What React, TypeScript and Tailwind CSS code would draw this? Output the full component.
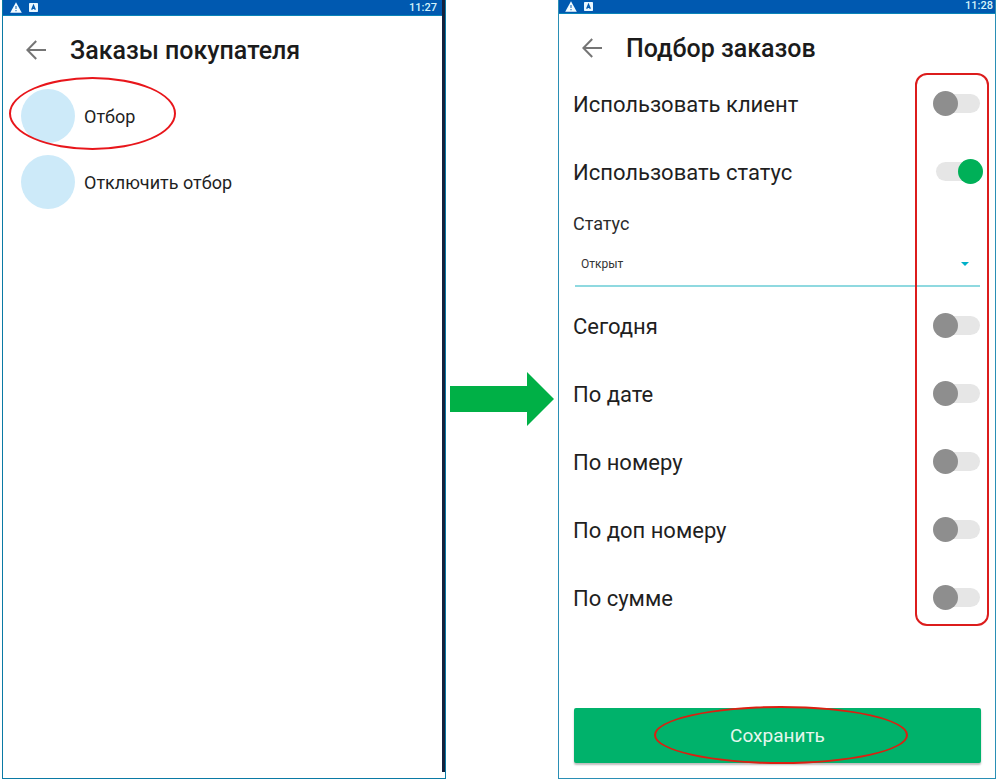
import React, { useState } from "react";
import clsx from "clsx";

const actions = ["Отбор", "Отключить отбор"];

const clientFilters = [
  { id: "client", title: "Использовать клиент", on: false },
  { id: "status", title: "Использовать статус", on: true },
];

const otherFilters = [
  { id: "today", title: "Сегодня", on: false },
  { id: "date", title: "По дате", on: false },
  { id: "number", title: "По номеру", on: false },
  { id: "extra", title: "По доп номеру", on: false },
  { id: "sum", title: "По сумме", on: false },
];

function StatusBar({ time, className }: { time: string; className: string }) {
  return (
    <div
      className={clsx(
        "flex items-center bg-[#0059b0] border-b border-[#0a84b8] text-[#d5f3fb]",
        className
      )}
    >
      <svg width="12" height="11" viewBox="0 0 12 11" className="shrink-0">
        <path d="M6 0.2 11.8 10.8H0.2Z" fill="#f2fbff" />
        <path d="M6 4v3M6 8v1.2" stroke="#3f82c2" strokeWidth="1.3" />
      </svg>
      <svg width="9" height="9" viewBox="0 0 8 8" className="ml-[7px] shrink-0">
        <rect width="8" height="8" rx="0.6" fill="#e9f7ff" />
        <path d="M2.4 6 4 2.2 5.6 6M3 4.8h2" fill="none" stroke="#0059b0" strokeWidth="1.2" />
      </svg>
      <span className="ml-auto text-[11px] leading-3 font-medium">{time}</span>
    </div>
  );
}

function Header({ title }: { title: string }) {
  return (
    <header className="flex items-center h-14 pt-3 pl-[23px]">
      <button type="button" aria-label="Назад" className="shrink-0">
        <svg width="20" height="20" viewBox="0 0 20 20" fill="none" stroke="#757575" strokeWidth="2">
          <path d="M20 10H1.6M10.2 1 1.4 10l8.8 9" />
        </svg>
      </button>
      <h1 className="ml-6 pt-0.5 text-[25px] leading-8 font-medium text-[#1b1b1b] whitespace-nowrap">{title}</h1>
    </header>
  );
}

function ToggleRow({ id, title, on }: { id: string; title: string; on: boolean }) {
  const [checked, setChecked] = useState(on);
  return (
    <div className="flex items-center justify-between h-[68px] pb-0.5 pl-[14px] pr-[15px]">
      <label htmlFor={id} className="pt-1 text-[22px] leading-7 text-[#1f1f1f]">
        {title}
      </label>
      <input
        id={id}
        type="checkbox"
        role="switch"
        checked={checked}
        onChange={(e) => setChecked(e.target.checked)}
        className="relative appearance-none shrink-0 w-11 h-[19px] rounded-full bg-[#e6e6e6] before:content-[''] before:absolute before:-top-[3px] before:-left-[3px] before:size-[25px] before:rounded-full before:bg-[#8e8e8e] checked:before:left-[22px] checked:before:bg-[#00b058]"
      />
    </div>
  );
}

function OrdersScreen() {
  return (
    <section className="flex flex-col flex-[444] min-w-0 border border-t-0 border-[#0a7aa5]">
      <div className="flex flex-col flex-1 mb-1.5 border-r-[3px] border-[#14213d]">
        <StatusBar time="11:27" className="h-4 pl-[7px] pr-[5px]" />
        <Header title="Заказы покупателя" />
        <ul className="flex flex-col gap-3 pt-[17px] pl-[18px]">
          {actions.map((action, ind: number) => (
            <li key={action} className="relative">
              <button type="button" className="flex items-center gap-[9px] text-lg text-[#1f1f1f]">
                <span className="size-[54px] rounded-full bg-[#cdeaf9]" />
                <span className="pt-0.5">{action}</span>
              </button>
              {ind === 0 && (
                <span className="absolute -top-3 -left-3 w-[167px] h-[73px] rounded-[50%] border-2 border-[#e8161b] pointer-events-none" />
              )}
            </li>
          ))}
        </ul>
      </div>
    </section>
  );
}

function FilterScreen() {
  return (
    <section className="flex flex-col flex-[438] min-w-0 border border-t-0 border-[#2a8fb5]">
      <StatusBar time="11:28" className="h-[14px] pl-1.5 pr-0.5 pb-px" />
      <Header title="Подбор заказов" />
      <form className="flex flex-col flex-1" onSubmit={(e) => e.preventDefault()}>
        <div className="relative">
          {clientFilters.map((filter) => (
            <ToggleRow key={filter.id} {...filter} />
          ))}
          <label htmlFor="statusValue" className="flex items-center h-9 pl-[14px] text-lg text-[#2b2b2b]">
            Статус
          </label>
          <div className="relative ml-4 mr-[15px] mb-[5px]">
            <select
              id="statusValue"
              className="block appearance-none w-full h-[45px] pl-1.5 text-xs text-[#333333] border-b-2 border-[#8fd9e0]"
            >
              <option>Открыт</option>
            </select>
            <svg width="8" height="4" viewBox="0 0 8 4" className="absolute right-[11px] top-5 pointer-events-none">
              <path d="M0 0h8L4 4Z" fill="#00b0c8" />
            </svg>
          </div>
          {otherFilters.map((filter) => (
            <ToggleRow key={filter.id} {...filter} />
          ))}
          <span className="absolute top-[3px] bottom-1.5 right-1.5 w-[74px] rounded-xl border-2 border-[#dc1c1c] pointer-events-none" />
        </div>
        <button
          type="submit"
          className="relative h-[55px] mt-auto ml-[15px] mr-[14px] mb-[15px] pt-0.5 rounded-xs bg-[#00b26b] text-[19px] text-[#e4f7ee] shadow-[0_2px_2px_#bdbdbd]"
        >
          Сохранить
          <span className="absolute -top-0.5 left-20 w-[254px] h-[58px] rounded-[50%] border-2 border-[#dc1f10] pointer-events-none" />
        </button>
      </form>
    </section>
  );
}

function App() {
  return (
    <main className="flex min-h-screen pl-0.5 pr-1 bg-white font-[Roboto,sans-serif]">
      <OrdersScreen />
      <div className="flex items-center justify-center w-28 shrink-0 pt-[18px]">
        <svg width="104" height="54" viewBox="0 0 104 54">
          <path d="M0 14h77V0l27 27-27 27V40H0Z" fill="#00b046" />
        </svg>
      </div>
      <FilterScreen />
    </main>
  );
}

export default App;
